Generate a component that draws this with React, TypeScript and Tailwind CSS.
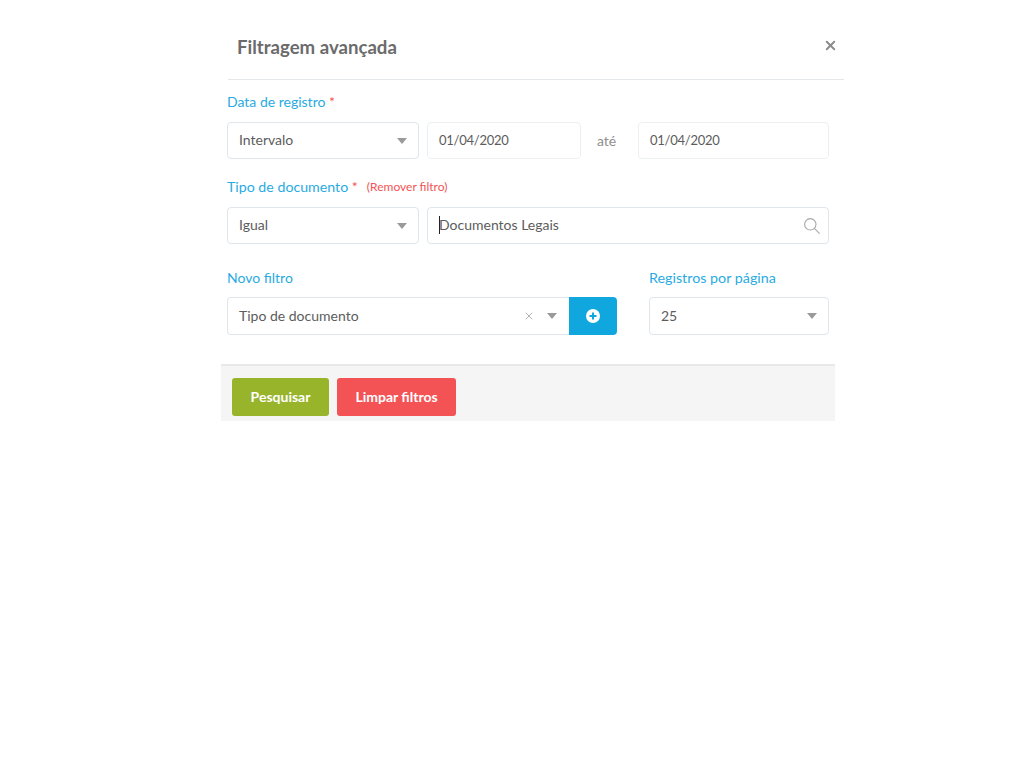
import { X } from 'lucide-react'

const fontStack = "font-['Lato','Noto_Sans',sans-serif]"

function Caret() {
  return <span className="h-0 w-0 border-x-[5.5px] border-t-[6px] border-x-transparent border-t-[#9a9a9a]" />
}

function Label({ text, required, size = 'text-[14px]' }: { text: string; required?: boolean; size?: string }) {
  return (
    <span className={`leading-[20px] text-[#29abe2] ${size}`}>
      {text}
      {required && <span className="text-[#f45356]"> *</span>}
    </span>
  )
}

function Select({ value, width }: { value: string; width: string }) {
  return (
    <div className={`flex h-[37px] items-center justify-between rounded-[4px] border border-[#dfe6eb] bg-white pl-[11px] pr-[11px] text-[14px] text-[#5c5c5c] ${width}`}>
      <span className="pb-[2px]">{value}</span>
      <Caret />
    </div>
  )
}

function DateInput({ width }: { width: string }) {
  return (
    <div className={`flex h-[37px] items-center rounded-[4px] border border-[#edf0f2] bg-white pl-[11px] text-[13px] tracking-[-0.25px] text-[#5c5c5c] ${width}`}>
      01/04/2020
    </div>
  )
}

export default function App() {
  return (
    <div className={`min-h-screen bg-white ${fontStack}`}>
      <div className="ml-[227px] w-[617px]">
        <div className="ml-px flex h-[80px] items-center justify-between border-b border-[#e4e8eb] pl-[9px] pr-[6px] pt-[16px]">
          <h1 className="text-[18.6px] font-bold text-[#6b6b6b]">Filtragem avançada</h1>
          <X size={15} strokeWidth={3} className="mb-[4px] text-[#8a8a8a]" />
        </div>

        <div className="pt-[9px]">
          <Label text="Data de registro" required />
        </div>
        <div className="mt-[9px] flex items-center">
          <Select value="Intervalo" width="w-[192px]" />
          <DateInput width="ml-[8px] w-[154px]" />
          <span className="w-[57px] pr-[6px] text-center text-[14px] text-[#8f8f8f]">até</span>
          <DateInput width="w-[191px]" />
        </div>

        <div className="mt-[18px] flex items-center">
          <Label text="Tipo de documento" required size="text-[14.2px]" />
          <span className="ml-[9px] text-[12px] leading-[20px] text-[#f45356]">(Remover filtro)</span>
        </div>
        <div className="mt-[10px] flex">
          <Select value="Igual" width="w-[192px]" />
          <div className="ml-[8px] flex h-[37px] w-[402px] items-center justify-between rounded-[4px] border border-[#dfe6eb] bg-white pl-[11px] pr-[8px] text-[14px] text-[#5c5c5c]">
            <span className="mb-[2px] border-l border-[#222222] leading-[18px]">
              <span className="-ml-px">Documentos Legais</span>
            </span>
            <svg width="16" height="16" viewBox="0 0 16 16" fill="none" stroke="#a8a8a8" strokeWidth="1.1">
              <circle cx="6.3" cy="6.3" r="5.7" />
              <path d="M10.4 10.4l5.2 5.2" />
            </svg>
          </div>
        </div>

        <div className="mt-[21px] flex">
          <div className="mr-[32px] w-[390px]">
            <Label text="Novo filtro" />
            <div className="mt-[8px] flex h-[38px]">
              <div className="flex flex-1 items-center rounded-l-[4px] border border-r-0 border-[#dfe6eb] bg-white pl-[11px] pr-[12px] text-[14px] text-[#5c5c5c]">
                <span className="flex-1 pb-[2px]">Tipo de documento</span>
                <X size={12} strokeWidth={1.5} className="mr-[12px] text-[#9a9a9a]" />
                <Caret />
              </div>
              <button className="flex w-[48px] items-center justify-center rounded-r-[4px] bg-[#10a6de]">
                <svg width="14" height="14" viewBox="0 0 14 14">
                  <circle cx="7" cy="7" r="7" fill="#ffffff" />
                  <path d="M7 3.5v7M3.5 7h7" stroke="#10a6de" strokeWidth="2" />
                </svg>
              </button>
            </div>
          </div>
          <div className="w-[180px]">
            <Label text="Registros por página" size="text-[14.3px]" />
            <div className="mt-[8px]">
              <Select value="25" width="w-[180px] h-[38px]" />
            </div>
          </div>
        </div>

        <div className="-ml-[6px] mt-[29px] flex h-[57px] w-[614px] gap-[8px] border-t-2 border-[#e9e9e9] bg-[#f5f5f5] pl-[11px] pt-[12px]">
          <button className="h-[38px] w-[97px] rounded-[3px] bg-[#98b42a] pb-[2px] text-[14px] font-bold text-white">Pesquisar</button>
          <button className="h-[38px] w-[119px] rounded-[3px] bg-[#f45356] pb-[2px] text-[14px] font-bold text-white">Limpar filtros</button>
        </div>
      </div>
    </div>
  )
}
